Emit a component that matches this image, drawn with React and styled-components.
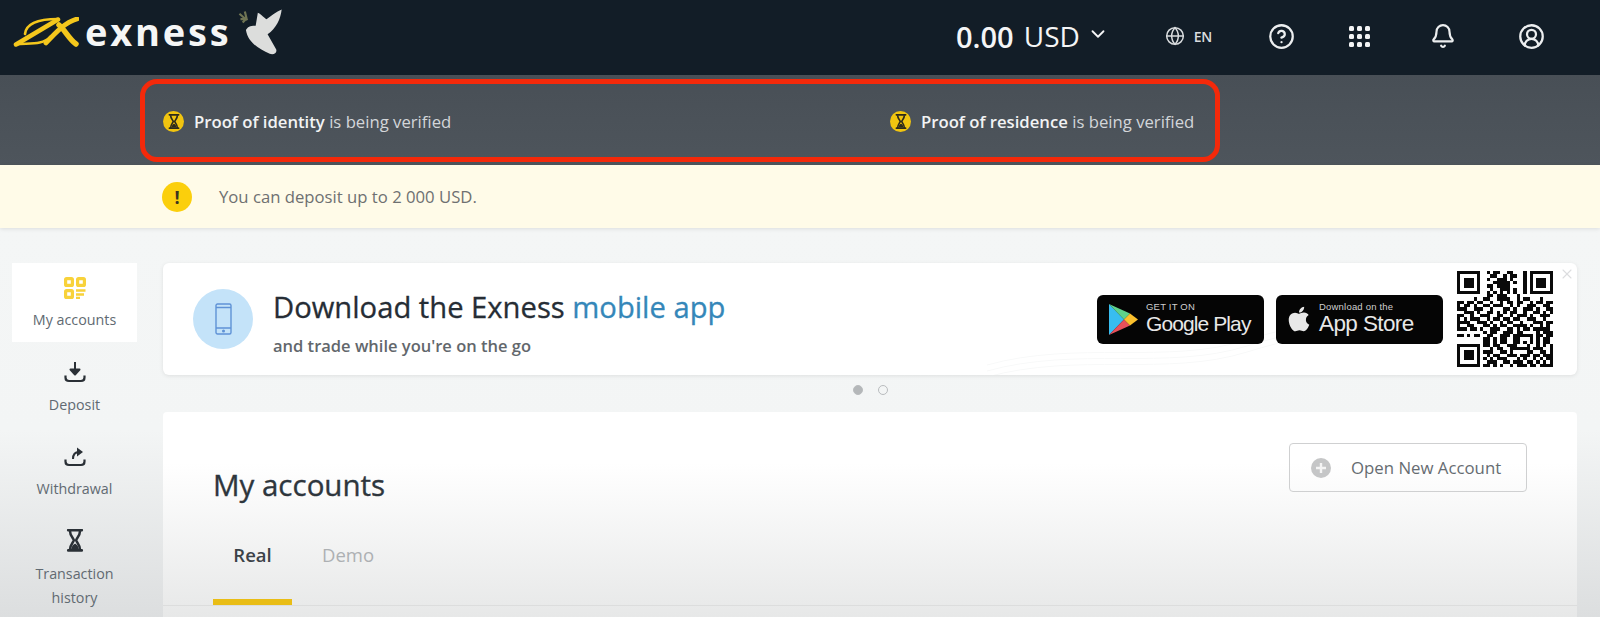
import styled, { createGlobalStyle } from "styled-components";
import { Globe, CircleHelp, Bell, CircleUserRound, ChevronDown, X } from "lucide-react";
import { FaApple } from "react-icons/fa";

const GlobalStyle = createGlobalStyle`
  html, body { margin: 0; padding: 0; }
  body { font-family: "Open Sans", "Liberation Sans", sans-serif; background: #f4f6f6; overflow: hidden; }
`;

const Page = styled.div`
  width: 1600px;
  height: 617px;
  overflow: hidden;
  display: flex;
  flex-direction: column;
`;

const Header = styled.header`
  height: 75px;
  flex: none;
  background: #121d27;
  display: flex;
  align-items: center;
  padding: 0 55px 0 13px;
  color: #fff;
`;

const Logo = styled.div`
  display: flex;
  align-items: center;
  height: 64px;
  margin-top: -12px;
`;

const LogoWord = styled.span`
  font-size: 38px;
  font-weight: 700;
  letter-spacing: 2.8px;
  margin-left: 6px;
  margin-top: -2px;
  line-height: 1;
  color: #f5f6f6;
`;

const Dove = styled.svg`
  margin-left: 4px;
  margin-top: -3px;
`;

const HeaderRight = styled.div`
  margin-left: auto;
  display: flex;
  align-items: center;
  margin-top: -3px;
`;

const Balance = styled.div`
  display: flex;
  align-items: center;
  font-size: 28px;
  color: #f4f5f6;
  margin-right: 56px;
  strong { font-size: 29px; font-weight: 600; margin-right: 10px; }
  svg { margin-left: 7px; margin-top: -4px; }
`;

const Lang = styled.div`
  display: flex;
  align-items: center;
  gap: 9px;
  font-size: 14px;
  font-weight: 600;
  letter-spacing: -0.3px;
  color: #d9dcde;
`;

const HeaderIcon = styled.div`
  display: flex;
  margin-left: ${(p) => p.$gap}px;
  color: #eceeef;
`;

const DotGrid = styled.div`
  display: grid;
  grid-template-columns: repeat(3, 5px);
  gap: 3px;
  i { display: block; width: 5px; height: 5px; border-radius: 1.5px; background: #f2f3f4; }
`;

const StatusBar = styled.div`
  height: 90px;
  flex: none;
  box-sizing: border-box;
  padding: 4px 0 3px 140px;
  background: linear-gradient(#484f56, #4e555c);
`;

const StatusBox = styled.div`
  width: 1080px;
  height: 83px;
  box-sizing: border-box;
  border: 5px solid #f4290a;
  border-radius: 17px;
  padding: 2px 0 0 18px;
  display: grid;
  grid-template-columns: 727px 1fr;
  align-items: center;
`;

const StatusItem = styled.div`
  display: flex;
  align-items: center;
  gap: 10px;
  font-size: 16.7px;
  color: #d3d6d9;
  b { font-weight: 600; color: #f2f3f4; }
`;

const Notice = styled.div`
  height: 63px;
  flex: none;
  box-sizing: border-box;
  padding-left: 162px;
  background: #fffbe8;
  display: flex;
  align-items: center;
  gap: 27px;
  font-size: 16.7px;
  color: #6e7071;
  box-shadow: 0 1px 4px rgba(0, 0, 0, 0.1);
  position: relative;
`;

const WarnDot = styled.div`
  width: 30px;
  height: 30px;
  border-radius: 50%;
  background: #fbcf0c;
  color: #3a3420;
  font-weight: 700;
  font-size: 18px;
  display: flex;
  align-items: center;
  justify-content: center;
`;

const Main = styled.div`
  flex: 1;
  min-height: 0;
  display: flex;
  padding: 35px 23px 0 12px;
  gap: 26px;
  background: linear-gradient(#f4f6f6 0, #f3f5f5 52%, #dcdedf 100%);
`;

const Sidebar = styled.nav`
  width: 125px;
  flex: none;
  display: flex;
  flex-direction: column;
`;

const NavItem = styled.div`
  height: ${(p) => (p.$active ? 79 : 84)}px;
  flex: none;
  box-sizing: border-box;
  padding-top: ${(p) => (p.$active ? 14 : 19)}px;
  background: ${(p) => (p.$active ? "#fff" : "transparent")};
  display: flex;
  flex-direction: column;
  align-items: center;
  text-align: center;
  font-size: 14.3px;
  line-height: 24px;
  color: #616a72;
  svg { margin-bottom: ${(p) => (p.$active ? 9 : 10)}px; flex: none; }
`;

const Content = styled.div`
  flex: 1;
  min-width: 0;
  display: flex;
  flex-direction: column;
`;

const Banner = styled.section`
  height: 112px;
  flex: none;
  position: relative;
  overflow: hidden;
  background: #fff;
  border-radius: 6px;
  box-shadow: 0 1px 4px rgba(0, 0, 0, 0.09);
  display: flex;
  align-items: center;
  padding: 0 24px 0 30px;
`;

const Waves = styled.svg`
  position: absolute;
  right: 170px;
  bottom: 0;
`;

const PhoneCircle = styled.div`
  width: 60px;
  height: 60px;
  flex: none;
  border-radius: 50%;
  background: #c4e3f9;
  display: flex;
  align-items: center;
  justify-content: center;
`;

const BannerText = styled.div`
  margin-left: 20px;
  margin-top: 7px;
  position: relative;
`;

const BannerTitle = styled.div`
  font-size: 29.2px;
  line-height: 38px;
  color: #262d35;
  -webkit-text-stroke: 0.3px currentColor;
  em { font-style: normal; color: #3587b9; }
`;

const BannerSub = styled.div`
  font-size: 16.5px;
  font-weight: 600;
  line-height: 24px;
  margin-top: 8px;
  color: #62676c;
`;

const Stores = styled.div`
  margin-left: auto;
  display: flex;
  align-items: center;
  gap: 12px;
  margin-right: 14px;
  position: relative;
`;

const StoreBadge = styled.div`
  width: 167px;
  height: 49px;
  box-sizing: border-box;
  background: #050505;
  border-radius: 6px;
  display: flex;
  align-items: center;
  padding-left: ${(p) => p.$pad}px;
  gap: ${(p) => p.$gap}px;
  color: #e8e8e8;
  font-family: "Liberation Sans", sans-serif;
  white-space: nowrap;
`;

const StoreLines = styled.div`
  display: flex;
  flex-direction: column;
  small { font-size: 9.5px; line-height: 10px; color: #cfcfcf; letter-spacing: 0.2px; }
  span {
    font-size: ${(p) => p.$size}px;
    line-height: 24px;
    letter-spacing: ${(p) => p.$track}px;
  }
`;

const QrSvg = styled.svg`
  display: block;
  flex: none;
  position: relative;
`;

const CloseBtn = styled.div`
  position: absolute;
  top: 3px;
  right: 2px;
  display: flex;
  color: #dcdddf;
`;

const Dots = styled.div`
  height: 37px;
  flex: none;
  display: flex;
  align-items: center;
  justify-content: center;
  gap: 15px;
  padding: 0 0 7px;
  box-sizing: border-box;
`;

const Dot = styled.i`
  width: 10px;
  height: 10px;
  box-sizing: border-box;
  border-radius: 50%;
  border: 1px solid #b9bcbe;
  background: ${(p) => (p.$on ? "#b4b7b9" : "transparent")};
`;

const AccountsCard = styled.section`
  flex: 1;
  min-height: 0;
  background: linear-gradient(#fff 0, #fff 25%, #e7e8e8 100%);
  border-radius: 4px 4px 0 0;
  padding: 31px 50px 0;
  position: relative;
`;

const CardTop = styled.div`
  display: flex;
  align-items: flex-start;
  justify-content: space-between;
  height: 98px;
`;

const CardTitle = styled.h1`
  margin: 23px 0 0;
  font-size: 29.5px;
  font-weight: 400;
  -webkit-text-stroke: 0.35px currentColor;
  line-height: 38px;
  color: #2e363d;
`;

const OpenButton = styled.button`
  width: 238px;
  height: 49px;
  margin: 0;
  box-sizing: border-box;
  border: 1px solid #cfd0d1;
  border-radius: 4px;
  background: transparent;
  display: flex;
  align-items: center;
  gap: 20px;
  padding: 0 0 0 21px;
  font-family: inherit;
  font-size: 16.8px;
  color: #666c71;
  cursor: pointer;
`;

const Tabs = styled.div`
  display: flex;
  height: 64px;
  margin: 0 -50px;
  padding: 0 50px;
  border-bottom: 1px solid #dcdddd;
`;

const Tab = styled.div`
  width: ${(p) => p.$w}px;
  height: 64px;
  box-sizing: border-box;
  padding-top: 2px;
  text-align: center;
  font-size: 18.5px;
  line-height: 24px;
  font-weight: ${(p) => (p.$on ? 600 : 400)};
  color: ${(p) => (p.$on ? "#3b4248" : "#adb0b3")};
  border-bottom: ${(p) => (p.$on ? "6px solid #e9bd16" : "none")};
  margin-right: ${(p) => p.$mr}px;
`;

const HourDot = styled.div`
  width: 21px;
  height: 21px;
  flex: none;
  border-radius: 50%;
  background: #f1c40f;
  display: flex;
  align-items: center;
  justify-content: center;
`;

const Hourglass = ({ size = 12, color = "#2d2a1c" }) => (
  <svg width={size} height={size * 1.25} viewBox="0 0 16 20" fill="none">
    <path d="M2 1h12M2 19h12" stroke={color} strokeWidth="2.4" strokeLinecap="round" />
    <path
      d="M3.5 1.5C3.5 6 6.5 8 7 10c-.5 2-3.5 4-3.5 8.5M12.5 1.5C12.5 6 9.5 8 9 10c.5 2 3.5 4 3.5 8.5"
      stroke={color}
      strokeWidth="2.2"
    />
    <path d="M4.5 18c.5-3 2.5-5 3.5-5s3 2 3.5 5z" fill={color} />
  </svg>
);

const ExnessMark = () => (
  <svg width="66" height="30" viewBox="0 0 66 30" fill="none" stroke="#f4c71c" strokeLinecap="round">
    <path d="M45 2.5 L3 27.5" strokeWidth="4.5" />
    <path d="M12 17C13 7 24 2 45 2" strokeWidth="2.6" />
    <path d="M3 27.5C16 26 30 28 37 20" strokeWidth="2.6" />
    <path d="M64 2C53 5 44 14 33 26" strokeWidth="4.8" />
    <path d="M46 8C52 13 56 22 63 27" strokeWidth="5.5" />
  </svg>
);

const DoveMark = () => (
  <Dove width="50" height="52" viewBox="8 6 46 48">
    <path d="M12 15l7 6M15 23l4-4M13 20h6M17 13l2 8" stroke="#6f7453" strokeWidth="2" fill="none" />
    <path
      d="M18 30C20 26 24 26 27 26L29 14C33 16 35 19 37 20C41 17 46 13 51 11C50 20 46 28 38 34L46 48C47 52 43 53 40 52C30 47 20 42 18 30Z"
      fill="#dcdddc"
    />
  </Dove>
);

const PhoneIcon = () => (
  <svg width="17" height="32" viewBox="0 0 17 32" fill="none" stroke="#5f92d6" strokeWidth="1.4">
    <rect x="1" y="1" width="15" height="30" rx="1.5" />
    <path d="M1 4.5h15M1 25h15" />
    <circle cx="8.5" cy="28" r="0.8" fill="#5f92d6" />
  </svg>
);

const PlayIcon = () => (
  <svg width="30" height="33" viewBox="0 0 30 33">
    <path d="M1 1v31l15-15.5z" fill="#38bdf0" />
    <path d="M1 1l15 15.5 6-6z" fill="#5fd28a" />
    <path d="M1 32l15-15.5 6 6z" fill="#e8505b" />
    <path d="M22 10.5l8 6-8 6-6-6z" fill="#fbc02d" />
  </svg>
);

const AccountsIcon = () => (
  <svg width="22" height="22" viewBox="0 0 22 22" fill="none" stroke="#f8d23a" strokeWidth="3.2">
    <rect x="1.6" y="1.6" width="6.8" height="6.8" rx="1" />
    <rect x="13.6" y="1.6" width="6.8" height="6.8" rx="1" />
    <rect x="1.6" y="13.6" width="6.8" height="6.8" rx="1" />
    <path d="M12 13.5h9.5M12 17.5h8M12 21h4" strokeWidth="2.4" />
  </svg>
);

const DepositIcon = () => (
  <svg width="22" height="22" viewBox="0 0 22 22" fill="none" stroke="#2a3036" strokeWidth="2">
    <path d="M11 1v11" />
    <path d="M6.5 8.5H15.5L11 13.5z" fill="#2a3036" strokeLinejoin="round" />
    <path d="M1.5 14.5v2c0 2 1.5 3.5 3.5 3.5h12c2 0 3.5-1.5 3.5-3.5v-2" strokeWidth="2.2" />
  </svg>
);

const WithdrawIcon = () => (
  <svg width="22" height="22" viewBox="0 0 22 22" fill="none" stroke="#2a3036" strokeWidth="2">
    <path d="M9 14c0-5 2-7 6-7" />
    <path d="M13 2.5L19 7l-6 4.500z" fill="#2a3036" stroke="none" />
    <path d="M1.5 14.5v2c0 2 1.5 3.5 3.5 3.5h12c2 0 3.5-1.5 3.5-3.5v-2" strokeWidth="2.2" />
  </svg>
);

const finder = ["1111111", "1000001", "1011101", "1011101", "1011101", "1000001", "1111111"];
const topMid = [
  "001011001100010",
  "000110010110010",
  "001001110100010",
  "000011111010010",
  "001101111000010",
  "000100111010010",
  "001010101010010",
];
const midRows = [
  "00000000011011100010000000000",
  "00000100110011110010110001000",
  "11011011001001011011001011011",
  "10110100110111001010011100110",
  "11100111001000110100111010011",
  "00111010011010101100100110101",
  "11001001110011001011101001110",
  "10101110010110110110011100100",
  "11110011101001011001000111011",
  "10011000110101100111101001010",
  "11101101001110011010110111110",
  "00000000101100111011000010111",
  "11010110011001110111111011011",
  "00000000110101100110001010110",
  "00000000110101100110101010110",
];
const bottomTail = [
  "0110110011100010010101",
  "0001011001111110111001",
  "0111001101000011001101",
  "0010110011101110110111",
  "0101011100010100101011",
  "0011100110111011010101",
  "0110101001011101101111",
];
const qrRows = [
  ...finder.map((f, i) => f + topMid[i] + f),
  ...midRows,
  ...finder.map((f, i) => f + bottomTail[i]),
];
const qrPath = qrRows
  .map((row, y) =>
    row
      .split("")
      .map((c, x) => (c === "1" ? `M${x} ${y}h1v1h-1z` : ""))
      .join("")
  )
  .join("");

export default function App() {
  return (
    <Page>
      <GlobalStyle />
      <Header>
        <Logo>
          <ExnessMark />
          <LogoWord>exness</LogoWord>
          <DoveMark />
        </Logo>
        <HeaderRight>
          <Balance>
            <strong>0.00</strong> USD
            <ChevronDown size={22} strokeWidth={2} />
          </Balance>
          <Lang>
            <Globe size={20} strokeWidth={1.8} />
            EN
          </Lang>
          <HeaderIcon $gap={56}>
            <CircleHelp size={27} strokeWidth={2} />
          </HeaderIcon>
          <HeaderIcon $gap={54}>
            <DotGrid>
              {[0, 1, 2, 3, 4, 5, 6, 7, 8].map((n) => (
                <i key={n} />
              ))}
            </DotGrid>
          </HeaderIcon>
          <HeaderIcon $gap={60}>
            <Bell size={26} strokeWidth={2} />
          </HeaderIcon>
          <HeaderIcon $gap={62}>
            <CircleUserRound size={27} strokeWidth={2} />
          </HeaderIcon>
        </HeaderRight>
      </Header>

      <StatusBar>
        <StatusBox>
          <StatusItem>
            <HourDot>
              <Hourglass />
            </HourDot>
            <span>
              <b>Proof of identity</b> is being verified
            </span>
          </StatusItem>
          <StatusItem>
            <HourDot>
              <Hourglass />
            </HourDot>
            <span>
              <b>Proof of residence</b> is being verified
            </span>
          </StatusItem>
        </StatusBox>
      </StatusBar>

      <Notice>
        <WarnDot>!</WarnDot>
        You can deposit up to 2 000 USD.
      </Notice>

      <Main>
        <Sidebar>
          <NavItem $active>
            <AccountsIcon />
            My accounts
          </NavItem>
          <NavItem>
            <DepositIcon />
            Deposit
          </NavItem>
          <NavItem>
            <WithdrawIcon />
            Withdrawal
          </NavItem>
          <NavItem>
            <Hourglass size={18} color="#2a3036" />
            Transaction
            <br />
            history
          </NavItem>
        </Sidebar>

        <Content>
          <Banner>
            <Waves width="420" height="70" viewBox="0 0 420 70" fill="none" stroke="#f8f9f9">
              <path d="M0 60C90 35 180 60 260 35S380 15 420 25" />
              <path d="M0 66C90 41 180 66 260 41S380 21 420 31" />
              <path d="M0 72C90 47 180 72 260 47S380 27 420 37" />
            </Waves>
            <PhoneCircle>
              <PhoneIcon />
            </PhoneCircle>
            <BannerText>
              <BannerTitle>
                Download the Exness <em>mobile app</em>
              </BannerTitle>
              <BannerSub>and trade while you're on the go</BannerSub>
            </BannerText>
            <Stores>
              <StoreBadge $pad={11} $gap={8}>
                <PlayIcon />
                <StoreLines $size={21} $track={-0.9}>
                  <small>GET IT ON</small>
                  <span>Google Play</span>
                </StoreLines>
              </StoreBadge>
              <StoreBadge $pad={9} $gap={6}>
                <FaApple size={28} />
                <StoreLines $size={22.5} $track={-0.6}>
                  <small>Download on the</small>
                  <span>App Store</span>
                </StoreLines>
              </StoreBadge>
            </Stores>
            <QrSvg width="96" height="96" viewBox="0 0 29 29" shapeRendering="crispEdges">
              <path d={qrPath} fill="#0a0a0a" />
            </QrSvg>
            <CloseBtn>
              <X size={16} strokeWidth={1.6} />
            </CloseBtn>
          </Banner>

          <Dots>
            <Dot $on />
            <Dot />
          </Dots>

          <AccountsCard>
            <CardTop>
              <CardTitle>My accounts</CardTitle>
              <OpenButton>
                <svg width="20" height="20" viewBox="0 0 20 20">
                  <circle cx="10" cy="10" r="10" fill="#c5c6c7" />
                  <path d="M10 5v10M5 10h10" stroke="#f4f4f4" strokeWidth="2.4" />
                </svg>
                Open New Account
              </OpenButton>
            </CardTop>
            <Tabs>
              <Tab $on $w={79} $mr={20}>
                Real
              </Tab>
              <Tab $w={72} $mr={0}>
                Demo
              </Tab>
            </Tabs>
          </AccountsCard>
        </Content>
      </Main>
    </Page>
  );
}
